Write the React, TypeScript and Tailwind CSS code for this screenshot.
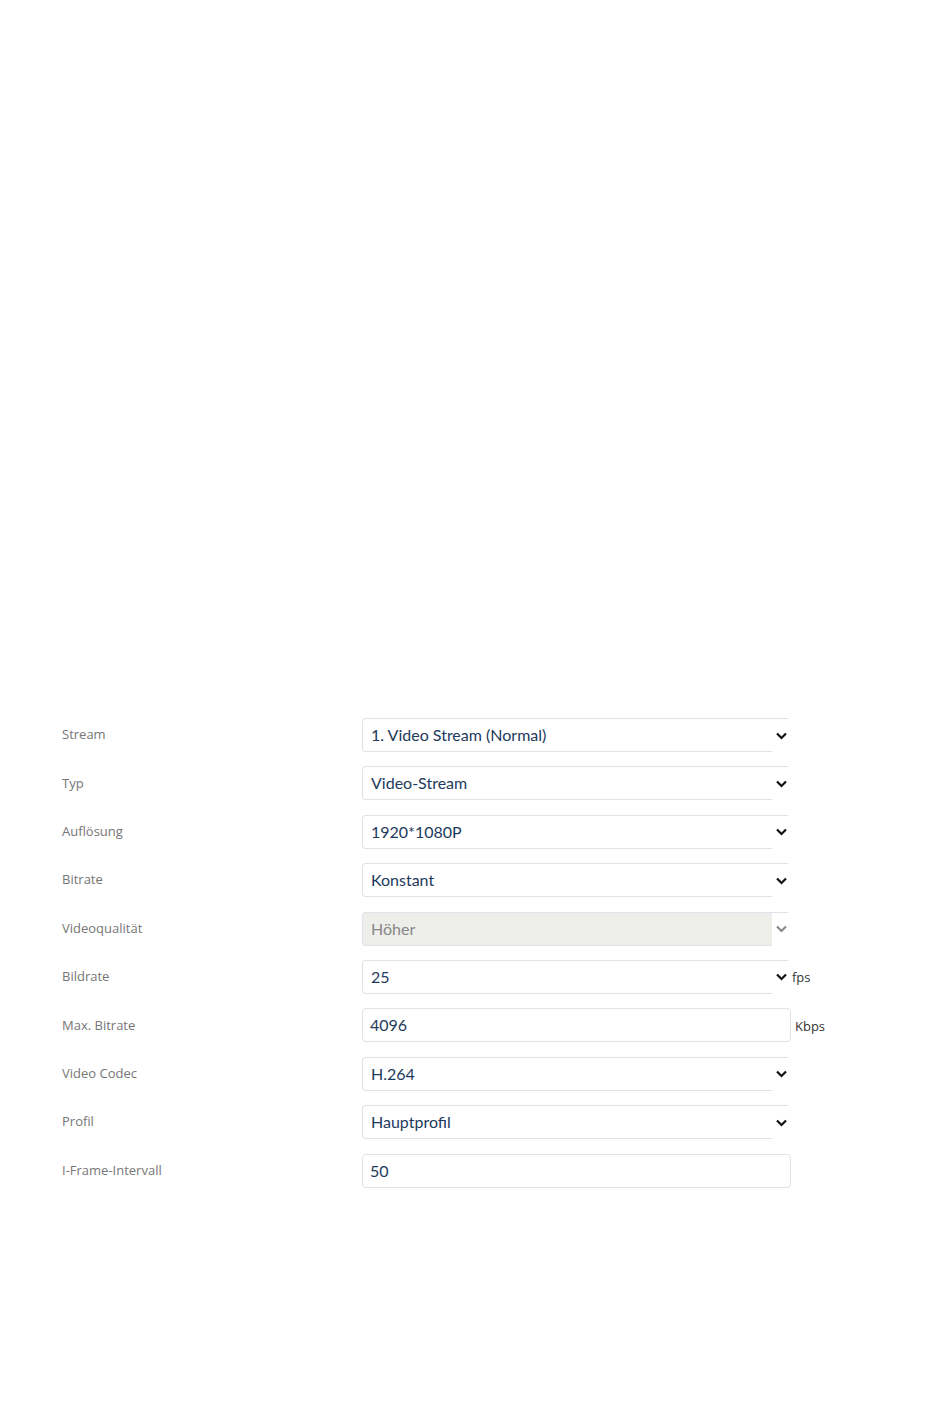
const rows: { label: string; value: string; kind: "select" | "input" | "disabled"; unit?: string }[] = [
  { label: "Stream", value: "1. Video Stream (Normal)", kind: "select" },
  { label: "Typ", value: "Video-Stream", kind: "select" },
  { label: "Auflösung", value: "1920*1080P", kind: "select" },
  { label: "Bitrate", value: "Konstant", kind: "select" },
  { label: "Videoqualität", value: "Höher", kind: "disabled" },
  { label: "Bildrate", value: "25", kind: "select", unit: "fps" },
  { label: "Max. Bitrate", value: "4096", kind: "input", unit: "Kbps" },
  { label: "Video Codec", value: "H.264", kind: "select" },
  { label: "Profil", value: "Hauptprofil", kind: "select" },
  { label: "I-Frame-Intervall", value: "50", kind: "input" },
];

const Chevron = ({ muted }: { muted?: boolean }) => (
  <svg width="11" height="8" viewBox="0 0 11 8" className="shrink-0">
    <path d="M1 1.5l4.5 4.5 4.5-4.5" fill="none" stroke={muted ? "#8a8a8a" : "#111"} strokeWidth={2.2} />
  </svg>
);

const Field = ({ row }: { row: (typeof rows)[number] }) => {
  if (row.kind === "input") {
    return (
      <div className="flex h-[34px] w-[429px] items-center rounded-[4px] border border-[#dde3e8] bg-white pl-[7px] text-[16px] text-[#1d3a5c]">
        {row.value}
      </div>
    );
  }
  const disabled = row.kind === "disabled";
  return (
    <div className="flex h-[34px] w-[426px] items-stretch">
      <div
        className={`flex flex-1 items-center rounded-l-[4px] border border-r-0 border-[#dde3e8] pl-[8px] text-[16px] ${
          disabled ? "bg-[#ededea] text-[#888]" : "bg-white text-[#1d3a5c]"
        }`}
      >
        {row.value}
      </div>
      <div className="flex w-[16px] items-center justify-start border-t border-[#dde3e8] bg-white pl-[4px]">
        <Chevron muted={disabled} />
      </div>
    </div>
  );
};

export default function App() {
  return (
    <div className="min-h-[1409px] w-[950px] bg-white pt-[718px] font-['Lato',sans-serif]">
      <div className="flex flex-col gap-[14.4px] pl-[62px]">
        {rows.map((row) => (
          <div key={row.label} className="flex h-[34px] items-center">
            <div className="w-[300px] font-['Open_Sans',sans-serif] text-[13px] text-[#767676]">{row.label}</div>
            <Field row={row} />
            {row.unit && (
              <span className="ml-[4px] mt-[2px] font-['Open_Sans',sans-serif] text-[13px] text-[#333]">{row.unit}</span>
            )}
          </div>
        ))}
      </div>
    </div>
  );
}
